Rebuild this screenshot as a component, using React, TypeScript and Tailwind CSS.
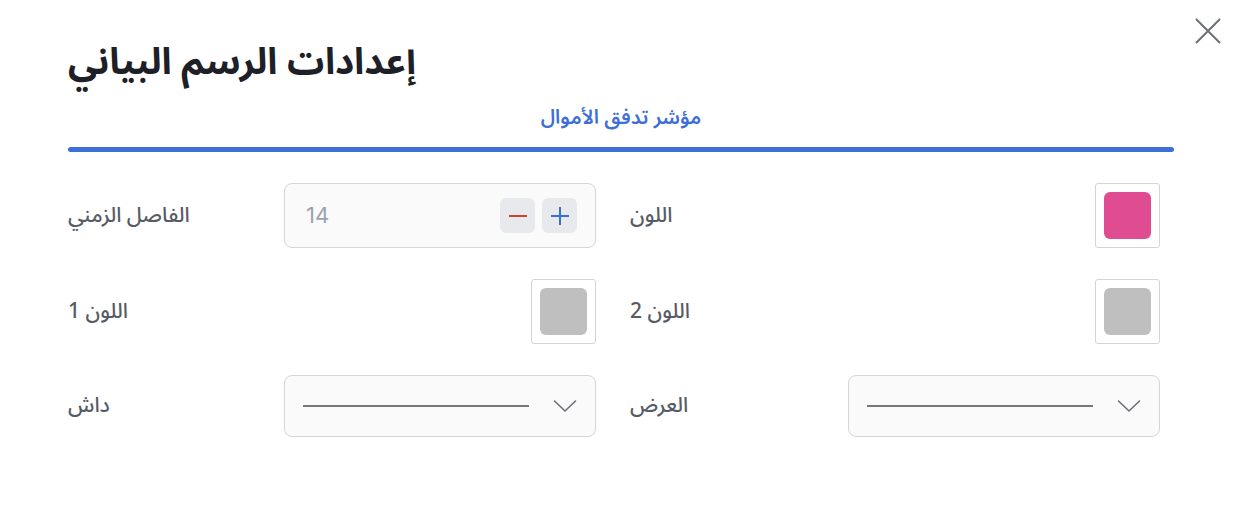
const FONT = { fontFamily: '"Noto Sans Arabic", "Noto Naskh Arabic", "DejaVu Sans", sans-serif' };

function Label({ text }: { text: string }) {
  return (
    <span dir="rtl" className="text-[21px] font-medium text-[#575b66]" style={FONT}>
      {text}
    </span>
  );
}

function Swatch({ color }: { color: string }) {
  return (
    <div className="w-[65px] h-[65px] border border-[#d3d4d8] rounded-[3px] bg-white p-2 flex">
      <div className="flex-1 rounded-[6px]" style={{ background: color }} />
    </div>
  );
}

function NumberInput({ value }: { value: number }) {
  return (
    <div className="w-[312px] h-[65px] border border-[#d4d6db] rounded-[8px] bg-[#fafafa] pl-[21px] pr-[18px] flex items-center justify-between">
      <span className="text-[22px] text-[#9ca3af]" style={{ fontFamily: 'Inter, sans-serif' }}>
        {value}
      </span>
      <div className="flex gap-[7px]">
        <button className="w-[35px] h-[35px] rounded-[6px] bg-[#e8e9ec] flex items-center justify-center">
          <span className="block w-[18px] h-[2px] bg-[#cf4326]" />
        </button>
        <button className="w-[35px] h-[35px] rounded-[6px] bg-[#e8e9ec] flex items-center justify-center relative">
          <span className="block w-[18px] h-[2px] bg-[#3a6fd2]" />
          <span className="absolute w-[2px] h-[18px] bg-[#3a6fd2]" />
        </button>
      </div>
    </div>
  );
}

function LineSelect() {
  return (
    <div className="w-[312px] h-[62px] border border-[#d4d6db] rounded-[8px] bg-[#fafafa] pl-[18px] pr-[18px] flex items-center justify-between">
      <span className="block w-[226px] h-[2px] bg-[#787878]" />
      <svg width="24" height="14" viewBox="0 0 24 14" fill="none" stroke="#6b6f78" strokeWidth="1.6" strokeLinecap="round" strokeLinejoin="round">
        <polyline points="1.5,2 12,12 22.5,2" />
      </svg>
    </div>
  );
}

export default function App() {
  return (
    <div className="w-[1242px] h-[516px] bg-white relative px-[68px]" style={FONT}>
      <button className="absolute top-[8px] right-[11px]">
        <svg width="46" height="46" viewBox="0 0 46 46" fill="none" stroke="#6b7079" strokeWidth="2" strokeLinecap="round">
          <path d="M11.5 11.5 34.5 34.5M34.5 11.5 11.5 34.5" />
        </svg>
      </button>

      <h1 className="pt-[38px] text-[37px] leading-[48px] font-bold text-[#1d2026]">
        إعدادات الرسم البياني
      </h1>

      {/* Tabs */}
      <div className="mt-[17px] flex flex-col items-center">
        <span className="text-[20px] leading-[30px] font-semibold text-[#3d6fd6]">مؤشر تدفق الأموال</span>
        <div className="mt-[14px] w-full h-[5px] rounded-full bg-[#3d6fd6]" />
      </div>

      {/* Settings grid */}
      <div className="mt-[31px] grid grid-cols-[528px_530px] gap-x-[34px] gap-y-[31px]">
        <div className="flex items-center justify-between h-[65px]">
          <Label text="الفاصل الزمني" />
          <NumberInput value={14} />
        </div>
        <div className="flex items-center justify-between h-[65px]">
          <Label text="اللون" />
          <Swatch color="#e04c91" />
        </div>
        <div className="flex items-center justify-between h-[65px]">
          <Label text="اللون 1" />
          <Swatch color="#bfbfbf" />
        </div>
        <div className="flex items-center justify-between h-[65px]">
          <Label text="اللون 2" />
          <Swatch color="#bfbfbf" />
        </div>
        <div className="flex items-center justify-between h-[62px]">
          <Label text="داش" />
          <LineSelect />
        </div>
        <div className="flex items-center justify-between h-[62px]">
          <Label text="العرض" />
          <LineSelect />
        </div>
      </div>
    </div>
  );
}
